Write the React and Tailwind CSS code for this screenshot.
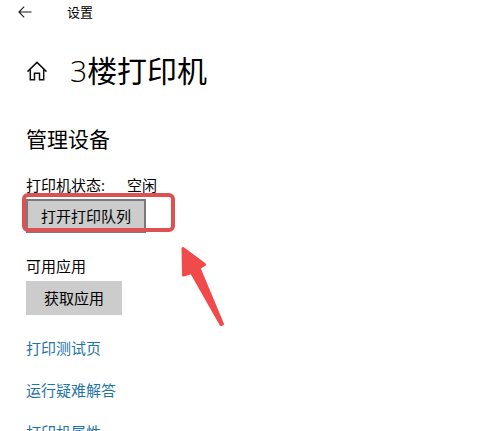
const links = [
  { id: 1, label: "打印测试页", href: "#test-page" },
  { id: 2, label: "运行疑难解答", href: "#troubleshoot" },
  { id: 3, label: "打印机属性", href: "#properties" },
];

function BackIcon() {
  return (
    <svg width="14" height="12" viewBox="0 0 14 12" fill="none" stroke="#1a1a1a" strokeWidth="1.1">
      <path d="M13.5 6H1M6.2 0.7L0.9 6l5.3 5.3" />
    </svg>
  );
}

function HomeIcon() {
  return (
    <svg width="21" height="20" viewBox="0 0 21 20" fill="none" stroke="#111" strokeWidth="1.5">
      <path d="M1.5 10.6L11 1.4l9.5 9.2" />
      <path d="M4.3 8.2v10.5h4.2v-6.5h5v6.5h4.2V8.2" />
    </svg>
  );
}

// Red pointer under the highlighted button
function Arrow() {
  return (
    <svg
      className="absolute top-11 left-38"
      width="48"
      height="86"
      viewBox="0 0 48 86"
      fill="#f14a4a"
      stroke="#f14a4a"
      strokeWidth="3"
      strokeLinejoin="round"
    >
      <path d="M5 5.500L26.500 21.500l-5.500 3.500L44.500 81L43 81.500L13.500 29.500L5.500 32z" />
    </svg>
  );
}

function App() {
  return (
    <div className="h-screen overflow-hidden bg-white text-[15px] leading-5 text-black font-['Open_Sans','Noto_Sans_CJK_SC',sans-serif]">
      {/* Title bar */}
      <header className="flex h-6 items-center gap-[35px] pl-[18px] text-[13px]">
        <button aria-label="返回">
          <BackIcon />
        </button>
        <span>设置</span>
      </header>

      <main className="px-[26px]">
        <div className="mt-[27px] flex h-10 items-center gap-[23px]">
          <a href="#home" aria-label="主页">
            <HomeIcon />
          </a>
          <h1 className="text-[30px] leading-10">
            <span className="font-light">3</span>楼打印机
          </h1>
        </div>

        <h2 className="mt-8 text-[21px] leading-8">管理设备</h2>

        <p className="mt-5 flex gap-[22px]">
          <span>打印机状态:</span>
          <span>空闲</span>
        </p>
        <div className="relative mt-1 w-fit">
          <button className="block h-[34px] border-2 border-[#7a7a7a] bg-[#cccccc] px-[13px]">打开打印队列</button>
          {/* Highlight around the queue button */}
          <div className="absolute -top-1.5 -left-1 h-[39px] w-[153px] rounded-md border-4 border-[#dc5252]" />
          <Arrow />
        </div>

        <p className="mt-[23px]">可用应用</p>
        <button className="mt-[5px] block h-[34px] bg-[#cccccc] px-[18px]">获取应用</button>

        <nav className="mt-[23px] flex flex-col gap-[22px]">
          {links.map((link) => (
            <a key={link.id} href={link.href} className="w-fit text-[#1f74a8]">
              {link.label}
            </a>
          ))}
        </nav>
      </main>
    </div>
  );
}

export default App;
